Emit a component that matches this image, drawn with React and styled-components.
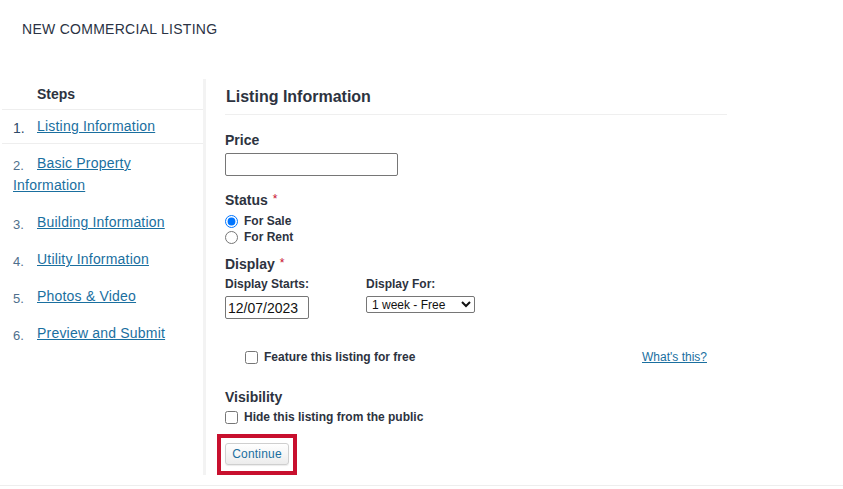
import React from "react";
import styled, { createGlobalStyle } from "styled-components";

const Global = createGlobalStyle`
  html, body { margin: 0; padding: 0; background: #fff; }
  body { font-family: "Liberation Sans", Arial, sans-serif; color: #2d3340; }
  * { box-sizing: border-box; }
`;

const Page = styled.div`
  width: 843px;
  border-bottom: 1px solid #eeeeee;
  padding-bottom: 10px;
`;

const Title = styled.h1`
  margin: 0;
  padding: 21px 0 0 22px;
  height: 79px;
  font-size: 14px;
  line-height: 16px;
  font-weight: normal;
  color: #2b3344;
  letter-spacing: 0.28px;
`;

const Layout = styled.div`
  display: flex;
  align-items: stretch;
`;

const Sidebar = styled.nav`
  width: 206px;
  flex: none;
  border-right: 3px solid #f3f3f3;
`;

const StepsHeader = styled.div`
  height: 31px;
  padding: 7px 0 0 35px;
  margin-left: 2px;
  font-size: 14px;
  line-height: 16px;
  font-weight: bold;
  color: #2d3340;
  border-bottom: 1px solid #eeeeee;
`;

const StepList = styled.ol`
  list-style: none;
  margin: 0;
  padding: 0;
`;

const Step = styled.li`
  padding: ${(p) => (p.$active ? "5px 10px 6px 11px" : "8px 10px 7px 13px")};
  margin-left: ${(p) => (p.$active ? "2px" : "0")};
  font-size: 14px;
  line-height: 22px;
  letter-spacing: 0.2px;
  border-bottom: ${(p) => (p.$active ? "1px solid #eeeeee" : "none")};
`;

const StepNum = styled.span`
  display: inline-block;
  width: 24px;
  line-height: 1;
  font-size: ${(p) => (p.$active ? "14px" : "13px")};
  color: ${(p) => (p.$active ? "#2e4a68" : "#4f6f8c")};
  letter-spacing: 0;
  position: relative;
  top: 2px;
`;

const StepLink = styled.a`
  color: #1a6f9f;
  text-decoration: underline;
  cursor: pointer;
`;

const Main = styled.main`
  flex: none;
  width: 521px;
  padding-left: 19px;
  display: flex;
  flex-direction: column;
`;

const SectionTitle = styled.h2`
  margin: 0;
  padding: 8px 0 7px 1px;
  font-size: 16px;
  line-height: 20px;
  font-weight: bold;
  color: #2d3340;
  border-bottom: 1px solid #efefef;
`;

const FieldLabel = styled.div`
  font-size: 14px;
  line-height: 16px;
  font-weight: bold;
  color: #2d3340;
  margin-top: ${(p) => p.$mt || 0}px;
`;

const Req = styled.span`
  color: #c8102e;
  font-size: 12px;
  font-weight: normal;
  margin-left: 5px;
  position: relative;
  top: -2px;
`;

const TextInput = styled.input`
  display: block;
  width: ${(p) => p.$w}px;
  height: 23px;
  margin-top: ${(p) => p.$mt || 0}px;
  border: 1px solid #767676;
  border-radius: 2px;
  padding: 1px 2px;
  font-family: "Liberation Sans", Arial, sans-serif;
  font-size: 14px;
  color: #111;
  background: #fff;
`;

const OptionRow = styled.label`
  display: flex;
  align-items: center;
  gap: 6px;
  height: 16px;
  font-size: 12px;
  font-weight: bold;
  color: #2d3340;
  margin-top: ${(p) => p.$mt || 0}px;
`;

const Radio = styled.input.attrs({ type: "radio" })`
  width: 13px;
  height: 13px;
  margin: 0;
`;

const Check = styled.input.attrs({ type: "checkbox" })`
  width: 13px;
  height: 13px;
  margin: 0;
`;

const DisplayGrid = styled.div`
  display: grid;
  grid-template-columns: 141px auto;
  align-items: start;
  margin-top: 4px;
`;

const SubLabel = styled.div`
  font-size: 12px;
  line-height: 14px;
  font-weight: bold;
  color: #2d3340;
  margin-bottom: 5px;
`;

const Select = styled.select`
  display: block;
  width: 109px;
  height: 17px;
  border: 1px solid #767676;
  border-radius: 2px;
  padding: 0 0 0 1px;
  font-family: "Liberation Sans", Arial, sans-serif;
  font-size: 12px;
  color: #111;
  background: #fff;
`;

const FeatureRow = styled.div`
  display: flex;
  align-items: center;
  justify-content: space-between;
  margin: 30px 20px 0 20px;
  height: 16px;
`;

const SmallLink = styled.a`
  font-size: 12px;
  color: #1a6f9f;
  text-decoration: underline;
  cursor: pointer;
`;

const Highlight = styled.div`
  align-self: flex-start;
  margin: 9px 0 0 -8px;
  border: 4px solid #c8102e;
  padding: 5px 4px 6px 4px;
`;

const Button = styled.button`
  display: block;
  width: 64px;
  height: 22px;
  border: 1px solid #cfcfcf;
  border-radius: 3px;
  background: linear-gradient(#ffffff, #ececec);
  box-shadow: 0 1px 1px rgba(0, 0, 0, 0.08);
  font-family: "Liberation Sans", Arial, sans-serif;
  font-size: 12px;
  font-weight: normal;
  letter-spacing: 0.2px;
  color: #1a6f9f;
  padding: 0;
  cursor: pointer;
`;

const steps = [
  "Listing Information",
  "Basic Property Information",
  "Building Information",
  "Utility Information",
  "Photos & Video",
  "Preview and Submit",
];

export default function App() {
  return (
    <Page>
      <Global />
      <Title>NEW COMMERCIAL LISTING</Title>
      <Layout>
        <Sidebar>
          <StepsHeader>Steps</StepsHeader>
          <StepList>
            {steps.map((s, i) => (
              <Step key={s} $active={i === 0}>
                <StepNum $active={i === 0}>{i + 1}.</StepNum>
                <StepLink>{s}</StepLink>
              </Step>
            ))}
          </StepList>
        </Sidebar>
        <Main>
          <SectionTitle>Listing Information</SectionTitle>
          <FieldLabel $mt={17}>Price</FieldLabel>
          <TextInput $w={173} $mt={5} defaultValue="" />
          <FieldLabel $mt={16}>
            Status<Req>*</Req>
          </FieldLabel>
          <OptionRow $mt={4}>
            <Radio name="status" defaultChecked />
            For Sale
          </OptionRow>
          <OptionRow>
            <Radio name="status" />
            For Rent
          </OptionRow>
          <FieldLabel $mt={11}>
            Display<Req>*</Req>
          </FieldLabel>
          <DisplayGrid>
            <div>
              <SubLabel>Display Starts:</SubLabel>
              <TextInput $w={84} defaultValue="12/07/2023" />
            </div>
            <div>
              <SubLabel>Display For:</SubLabel>
              <Select defaultValue="1">
                <option value="1">1 week - Free</option>
                <option value="2">2 weeks</option>
              </Select>
            </div>
          </DisplayGrid>
          <FeatureRow>
            <OptionRow>
              <Check />
              Feature this listing for free
            </OptionRow>
            <SmallLink>What's this?</SmallLink>
          </FeatureRow>
          <FieldLabel $mt={24}>Visibility</FieldLabel>
          <OptionRow $mt={4}>
            <Check />
            Hide this listing from the public
          </OptionRow>
          <Highlight>
            <Button>Continue</Button>
          </Highlight>
        </Main>
      </Layout>
    </Page>
  );
}
